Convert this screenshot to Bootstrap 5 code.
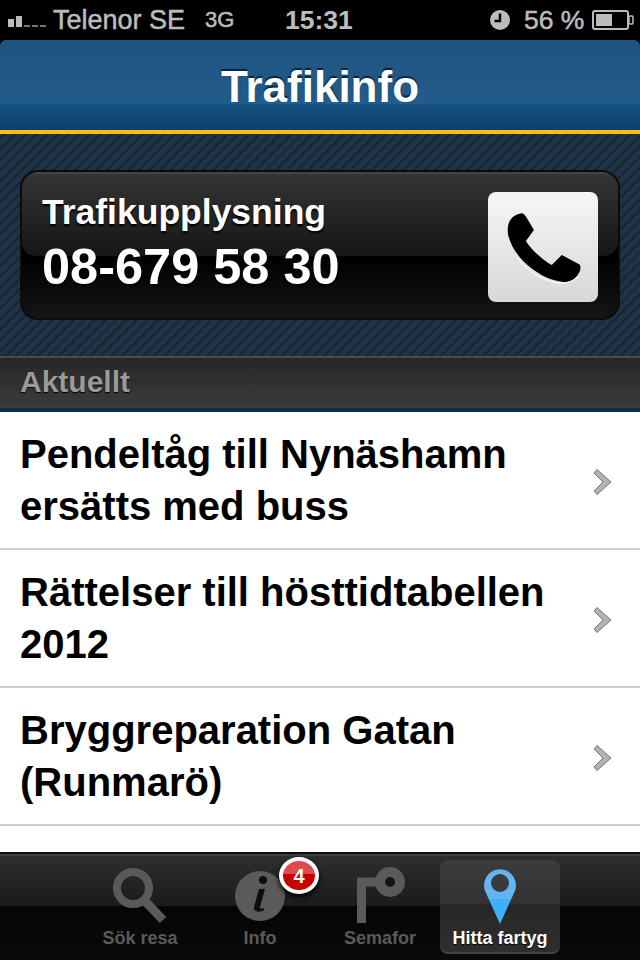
<!DOCTYPE html>
<html lang="sv">
<head>
    <meta charset="UTF-8">
    <title>Trafikinfo</title>
    <meta name="viewport" content="width=device-width, initial-scale=1">
    <link href="https://cdn.jsdelivr.net/npm/bootstrap@5.3.2/dist/css/bootstrap.min.css" rel="stylesheet">
    <style>
        html, body { height: 100%; }
        body { background: #000; font-family: "Liberation Sans", Arial, sans-serif; }
        .app { width: 640px; height: 960px; overflow: hidden; }
        .statusbar { height: 40px; background: #000; color: #bcbcbc; font-size: 26.5px; line-height: 40px; padding-left: 8px; -webkit-text-stroke: 0.5px #bcbcbc; }
        .statusbar > * { flex-shrink: 0; white-space: nowrap; }
        .statusbar svg { display: block; }
        .op-name { margin-left: 7px; width: 152px; font-size: 27px; }
        .net-type { font-size: 22px; width: 80px; }
        .clock { font-size: 26.5px; font-weight: bold; width: 205px; -webkit-text-stroke: 0; }
        .batt-pct { margin-left: 14px; width: 68px; }
        .topbar { height: 90px; padding-top: 4px; border-radius: 6px 6px 0 0; background: linear-gradient(#1f5480 0, #225c8a 64px, #14527f 65px, #0c3f6c 100%); color: #fff; font-size: 44px; font-weight: bold; text-shadow: 0 -2px 1px #062440; }
        .yellow-line { height: 4px; background: #fdbc13; }
        .stripes { height: 222px; padding: 36px 20px; background: repeating-linear-gradient(-45deg, #1f3347 0, #1f3347 4.5px, #16242f 5.5px, #16242f 6.5px, #1f3347 7.5px); }
        .phone-card { position: relative; height: 150px; border: 2px solid #0b0b0b; border-radius: 18px; background: linear-gradient(#000 84px, #151515 100%); overflow: hidden; padding: 20px 20px 0 20px; color: #fff; font-weight: bold; }
        .phone-card::before { content: ""; position: absolute; left: 0; right: 0; top: 0; height: 84px; border-radius: 0 0 14px 14px; background: linear-gradient(#343434, #161616); border-top: 2px solid #444; }
        .phone-txt { position: relative; }
        .phone-lbl { font-size: 35.5px; line-height: 40px; text-shadow: 0 2px 2px #000; }
        .phone-num { font-size: 50.5px; line-height: 70px; text-shadow: 0 2px 2px #000; }
        .phone-btn { position: relative; width: 110px; height: 110px; border: 0; padding: 0; border-radius: 8px; background: linear-gradient(#f6f6f6, #d8d8d8); }
        .phone-btn svg { display: block; }
        .section-bar { height: 56px; border-top: 2px solid #4a4a4a; border-bottom: 4px solid #0a2c4f; background: linear-gradient(#262626, #3c3c3c); color: #9a9a9a; font-size: 30px; font-weight: bold; line-height: 48px; padding-left: 20px; text-shadow: 0 1px 1px #000; }
        .news-list { height: 440px; background: #fff; overflow: hidden; }
        .news-row { height: 138px; border: 0; border-bottom: 2px solid #cdcdcd; padding: 0 28px 0 20px; color: #000; font-size: 40px; font-weight: bold; line-height: 52px; }
        .news-row svg { margin-top: 4px; }
        .tabbar { height: 108px; border-top: 2px solid #0d0d0d; background: linear-gradient(#2e2e2e 0, #1b1b1b 52px, #050505 52px, #0a0a0a 100%); padding-top: 6px; box-shadow: inset 0 2px 0 #3c3c3c; }
        .tab-btn { position: relative; width: 120px; height: 94px; border-radius: 8px; color: #5a5a5a; font-size: 18px; font-weight: bold; text-align: center; padding-top: 66px; line-height: 24px; }
        .tab-btn svg { position: absolute; left: 0; top: 0; }
        .tab-on { color: #fff; background: linear-gradient(#3c3c3c 0, #323232 44px, #272727 44px, #2e2e2e 100%); border-bottom: 2px solid #444; text-shadow: 0 1px 1px #000; }
        .tab-badge { position: absolute; left: 79px; top: -3px; width: 40px; height: 37px; font-size: 20px; line-height: 30px; font-weight: bold; color: #fff; border: 4px solid #fff; border-radius: 50%; background: linear-gradient(#de4a4e 0, #de4a4e 45%, #c80000 45%, #c80000 100%); box-shadow: 0 3px 5px #000; text-align: center; padding: 0; }
    </style>
</head>
<body>
<div class="app d-flex flex-column">
    <div class="statusbar d-flex align-items-center">
        <svg width="38" height="14" viewBox="0 0 38 14"><rect x="0" y="6" width="6" height="8" fill="#bcbcbc"/><rect x="8" y="3" width="6" height="11" fill="#bcbcbc"/><rect x="16" y="12" width="6" height="2" fill="#777"/><rect x="24" y="12" width="6" height="2" fill="#777"/><rect x="32" y="12" width="6" height="2" fill="#777"/></svg>
        <span class="op-name">Telenor SE</span>
        <span class="net-type">3G</span>
        <span class="clock">15:31</span>
        <svg width="20" height="20" viewBox="0 0 20 20"><circle cx="10" cy="10" r="10" fill="#bcbcbc"/><path d="M10 3.5V11H4.5" fill="none" stroke="#000" stroke-width="2.4"/></svg>
        <span class="batt-pct">56 %</span>
        <svg width="42" height="20" viewBox="0 0 42 20"><rect x="1" y="1" width="35" height="18" rx="2" fill="none" stroke="#bcbcbc" stroke-width="2"/><rect x="4" y="4" width="16" height="12" fill="#bcbcbc"/><rect x="37" y="6" width="4" height="8" rx="1" fill="none" stroke="#bcbcbc" stroke-width="1.5"/></svg>
    </div>
    <div class="topbar d-flex align-items-center justify-content-center">Trafikinfo</div>
    <div class="yellow-line"></div>
    <div class="stripes">
        <div class="phone-card d-flex justify-content-between">
            <div class="phone-txt">
                <div class="phone-lbl">Trafikupplysning</div>
                <div class="phone-num">08-679 58 30</div>
            </div>
            <button class="phone-btn" type="button" aria-label="Ring">
                <svg width="110" height="110" viewBox="145 97 328 328"><path d="M245 160C255 162 258 170 263 178L282 210L258 243C275 270 305 297 335 315L365 285L418 313C424 320 420 335 412 345C400 362 385 366 370 365C335 362 300 345 272 322C240 297 215 265 205 225C200 195 210 165 245 160Z" fill="#000"/><path d="M232 292C262 332 310 362 358 368C380 369 400 362 414 347" fill="none" stroke="#fff" stroke-width="3" transform="translate(0 1)"/></svg>
            </button>
        </div>
    </div>
    <div class="section-bar">Aktuellt</div>
    <div class="list-group rounded-0 news-list">
        <a class="list-group-item rounded-0 news-row d-flex align-items-center justify-content-between text-decoration-none">
            <span>Pendeltåg till Nynäshamn<br>ersätts med buss</span>
            <svg width="20" height="28" viewBox="0 0 20 28"><path d="M2 5L5 1.500L19 14L5 26.500L2 23L11 14Z" fill="#b3b3b3" stroke="#777" stroke-width="1"/></svg>
        </a>
        <a class="list-group-item rounded-0 news-row d-flex align-items-center justify-content-between text-decoration-none">
            <span>Rättelser till hösttidtabellen<br>2012</span>
            <svg width="20" height="28" viewBox="0 0 20 28"><path d="M2 5L5 1.500L19 14L5 26.500L2 23L11 14Z" fill="#b3b3b3" stroke="#777" stroke-width="1"/></svg>
        </a>
        <a class="list-group-item rounded-0 news-row d-flex align-items-center justify-content-between text-decoration-none">
            <span>Bryggreparation Gatan<br>(Runmarö)</span>
            <svg width="20" height="28" viewBox="0 0 20 28"><path d="M2 5L5 1.500L19 14L5 26.500L2 23L11 14Z" fill="#b3b3b3" stroke="#777" stroke-width="1"/></svg>
        </a>
    </div>
    <div class="tabbar d-flex justify-content-center">
        <div class="tab-btn">
            <svg width="120" height="66" viewBox="0 0 120 66"><circle cx="53" cy="28" r="16" fill="none" stroke="#5a5a5a" stroke-width="8"/><path d="M65 41L83 60" stroke="#5a5a5a" stroke-width="9"/></svg>
            Sök resa
        </div>
        <div class="tab-btn">
            <svg width="120" height="66" viewBox="0 0 120 66"><circle cx="60" cy="36" r="25" fill="#5a5a5a"/><circle cx="63" cy="20" r="4" fill="#0d0d0d"/><path d="M59 29H65L60 47C60 49 62 49 64 48L64 50C60 53 53 52 54 47Z" fill="#0d0d0d"/></svg>
            Info
            <span class="badge tab-badge">4</span>
        </div>
        <div class="tab-btn">
            <svg width="120" height="66" viewBox="0 0 120 66"><path d="M41.500 63V22H62" fill="none" stroke="#5a5a5a" stroke-width="9"/><circle cx="70" cy="22" r="10" fill="#141414" stroke="#5a5a5a" stroke-width="10"/></svg>
            Semafor
        </div>
        <div class="tab-btn tab-on">
            <svg width="120" height="66" viewBox="0 0 120 66"><defs><linearGradient id="pinfill" x1="0" y1="0" x2="0" y2="1"><stop offset="0.54" stop-color="#62b5f0"/><stop offset="0.54" stop-color="#3cafff"/></linearGradient></defs><path d="M60 64L46 33A16 16 0 1 1 74 33Z" fill="url(#pinfill)"/><circle cx="60" cy="23" r="9" fill="#3a3a3a"/></svg>
            Hitta fartyg
        </div>
    </div>
</div>
<script src="https://cdn.jsdelivr.net/npm/bootstrap@5.3.2/dist/js/bootstrap.bundle.min.js"></script>
</body>
</html>
